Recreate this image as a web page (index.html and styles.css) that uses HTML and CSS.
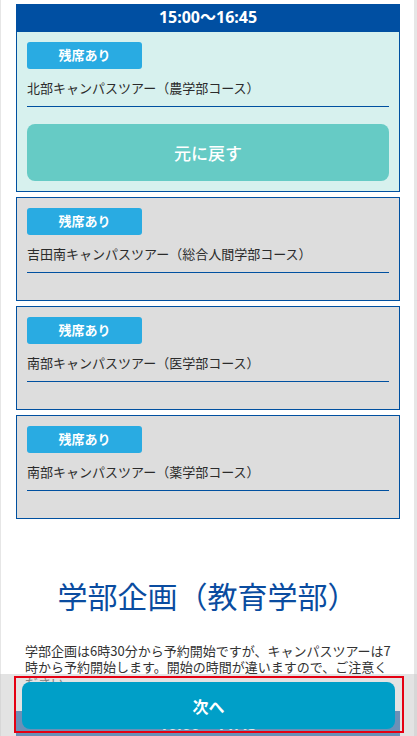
FILE: index.html
```html
<!DOCTYPE html>
<html lang="ja">
<head>
    <meta charset="UTF-8">
    <meta name="viewport" content="width=device-width, initial-scale=1.0">
    <title>キャンパスツアー予約</title>
    <link rel="stylesheet" href="styles.css">
</head>
<body>
    <div class="page">
        <div class="slot">
            <div class="slot-time">15:00～16:45</div>
            <div class="tour selected">
                <span class="badge">残席あり</span>
                <p class="tour-name">北部キャンパスツアー（農学部コース）</p>
                <button class="reset-button">元に戻す</button>
            </div>
            <div class="tour">
                <span class="badge">残席あり</span>
                <p class="tour-name">吉田南キャンパスツアー（総合人間学部コース）</p>
            </div>
            <div class="tour">
                <span class="badge">残席あり</span>
                <p class="tour-name">南部キャンパスツアー（医学部コース）</p>
            </div>
            <div class="tour">
                <span class="badge">残席あり</span>
                <p class="tour-name">南部キャンパスツアー（薬学部コース）</p>
            </div>
        </div>

        <h2 class="section-title">学部企画（教育学部）</h2>
        <p class="note">学部企画は6時30分から予約開始ですが、キャンパスツアーは7時から予約開始します。開始の時間が違いますので、ご注意ください。</p>

        <div class="slot">
            <div class="slot-time">10:00～11:45</div>
        </div>
    </div>

    <div class="bottom-bar">
        <div class="bottom-nav">
            <button class="next-button">次へ</button>
        </div>
    </div>
</body>
</html>
```

FILE: styles.css
```css
body {
    font-family: "Noto Sans", "Noto Sans CJK JP", sans-serif;
    margin: 0;
    padding: 0;
    background-color: #e6e6e6;
    color: #333;
}
.page {
    margin-left: 1px;
    width: 413px;
    min-height: 900px;
    background-color: #fff;
    padding-top: 4px;
}
.slot {
    margin: 0 14px 0 15px;
}
.slot-time {
    height: 27px;
    line-height: 27px;
    background-color: #004fa2;
    color: #fff;
    font-size: 16px;
    font-weight: bold;
    text-align: center;
}
.tour {
    display: flex;
    flex-direction: column;
    align-items: flex-start;
    border: 1px solid #0050a0;
    background-color: #dddddd;
    padding: 10px;
    margin-top: 5px;
}
.tour.selected {
    background-color: #d7f1ee;
    margin-top: 0;
}
.badge {
    display: block;
    width: 115px;
    height: 27px;
    line-height: 27px;
    background-color: #29abe2;
    border-radius: 3px;
    color: #fff;
    font-size: 13px;
    font-weight: bold;
    text-align: center;
}
.tour-name {
    align-self: stretch;
    margin: 9px 0 17px;
    padding-bottom: 8px;
    border-bottom: 1px solid #0050a0;
    color: #2b2b2b;
    font-family: "Noto Sans CJK JP", sans-serif;
    font-size: 13px;
    line-height: 20px;
}
.reset-button {
    align-self: stretch;
    height: 57px;
    background-color: #66cbc5;
    color: #fff;
    border: none;
    border-radius: 8px;
    font-family: "Noto Sans CJK JP", sans-serif;
    font-size: 17px;
    font-weight: 500;
    cursor: pointer;
}
.section-title {
    margin: 55px 0 0;
    color: #0a4ca0;
    font-family: "Noto Sans CJK JP", sans-serif;
    font-size: 30px;
    font-weight: normal;
    line-height: 42px;
    text-align: center;
}
.note {
    margin: 27px 0 20px;
    padding: 0 20px 0 24px;
    font-family: "Noto Sans CJK JP", sans-serif;
    font-size: 13px;
    line-height: 16px;
}
.bottom-bar {
    position: fixed;
    left: 0;
    right: 0;
    bottom: 0;
    height: 62px;
    padding-top: 2px;
    box-sizing: border-box;
    background-color: rgba(202, 202, 202, 0.53);
}
.bottom-nav {
    margin: 0 13px 0 14px;
    height: 57px;
    box-sizing: border-box;
    border: 2px solid #e50012;
    padding: 4px 7px 2px 6px;
}
.next-button {
    width: 100%;
    height: 47px;
    background-color: #009fc8;
    color: #fff;
    border: none;
    border-radius: 8px;
    font-family: "Noto Sans CJK JP", sans-serif;
    font-size: 16px;
    font-weight: bold;
    cursor: pointer;
}
```
